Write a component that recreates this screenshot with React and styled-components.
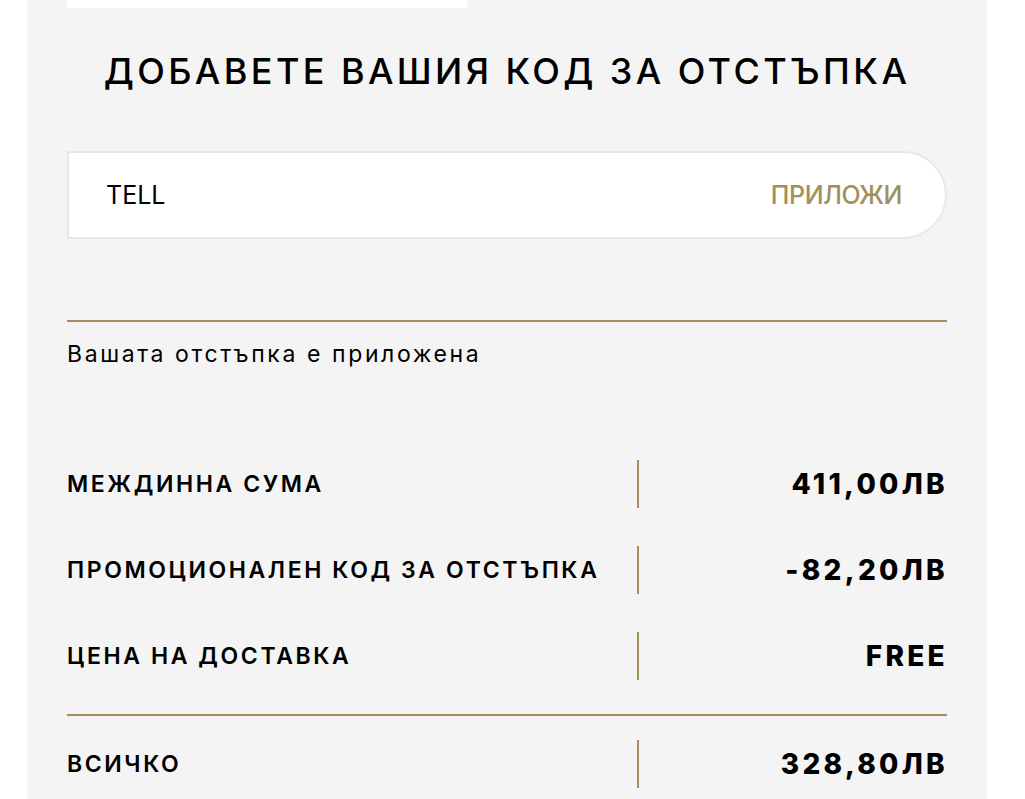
import React from 'react'
import styled, { createGlobalStyle } from 'styled-components'

const gold = '#a48e5c'

const GlobalStyle = createGlobalStyle`
  html, body {
    margin: 0;
    padding: 0;
    background: #fff;
  }

  body {
    font-family: 'Inter', 'Noto Sans', sans-serif;
    color: #000;
  }
`

const Panel = styled.div`
  width: 960px;
  min-height: 100vh;
  margin-left: 27px;
  padding: 0 40px;
  box-sizing: border-box;
  background: #f4f4f4;
  display: flex;
  flex-direction: column;
`

const TopStrip = styled.div`
  width: 400px;
  height: 8px;
  background: #fff;
`

const Heading = styled.h2`
  margin: 41px 0 0;
  font-size: 36px;
  line-height: 44px;
  font-weight: 500;
  letter-spacing: 3.4px;
  text-align: center;
  text-transform: uppercase;
`

const CodeField = styled.form`
  margin-top: 58px;
  height: 88px;
  box-sizing: border-box;
  display: flex;
  align-items: center;
  justify-content: space-between;
  padding: 0 43px 0 37px;
  background: #fff;
  border: 2px solid #e8e8e8;
  border-radius: 0 44px 44px 0;
`

const CodeInput = styled.input`
  flex: 1;
  border: 0;
  outline: none;
  background: transparent;
  padding: 0;
  font-family: inherit;
  font-size: 25px;
  font-weight: 400;
  color: #000;
`

const ApplyButton = styled.button`
  border: 0;
  background: none;
  padding: 0;
  font-family: inherit;
  font-size: 25px;
  font-weight: 500;
  letter-spacing: -0.4px;
  color: ${gold};
  cursor: pointer;
`

const Rule = styled.hr`
  margin: ${(p) => p.$top}px 0 0;
  border: 0;
  height: 2px;
  background: ${gold};
`

const Notice = styled.p`
  margin: 19px 0 0;
  font-size: 23px;
  line-height: 27px;
  font-weight: 400;
  letter-spacing: 2.6px;
`

const Summary = styled.div`
  display: flex;
  flex-direction: column;
  gap: 38px;
  margin-top: 92px;
`

const Row = styled.div`
  display: grid;
  grid-template-columns: 570px 2px 1fr;
  align-items: center;
  height: 48px;
  margin-top: ${(p) => p.$top || 0}px;
`

const Label = styled.span`
  font-size: 23px;
  font-weight: 600;
  letter-spacing: 2.6px;
  text-transform: uppercase;
`

const Divider = styled.span`
  width: 2px;
  height: 48px;
  background: ${gold};
`

const Value = styled.span`
  justify-self: end;
  font-size: 28px;
  font-weight: 800;
  letter-spacing: 3.3px;
  margin-right: -1px;
`

const rows = [
  { label: 'Междинна сума', value: '411,00ЛВ' },
  { label: 'Промоционален код за отстъпка', value: '-82,20ЛВ' },
  { label: 'Цена на доставка', value: 'FREE' },
]

export default function App() {
  return (
    <Panel lang="bg">
      <GlobalStyle />
      <TopStrip />
      <Heading>Добавете вашия код за отстъпка</Heading>
      <CodeField onSubmit={(e) => e.preventDefault()}>
        <CodeInput defaultValue="TELL" />
        <ApplyButton type="submit">ПРИЛОЖИ</ApplyButton>
      </CodeField>
      <Rule $top={81} />
      <Notice>Вашата отстъпка е приложена</Notice>
      <Summary>
        {rows.map((r) => (
          <Row key={r.label}>
            <Label>{r.label}</Label>
            <Divider />
            <Value>{r.value}</Value>
          </Row>
        ))}
      </Summary>
      <Rule $top={34} />
      <Row $top={24}>
        <Label>Всичко</Label>
        <Divider />
        <Value>328,80ЛВ</Value>
      </Row>
    </Panel>
  )
}
